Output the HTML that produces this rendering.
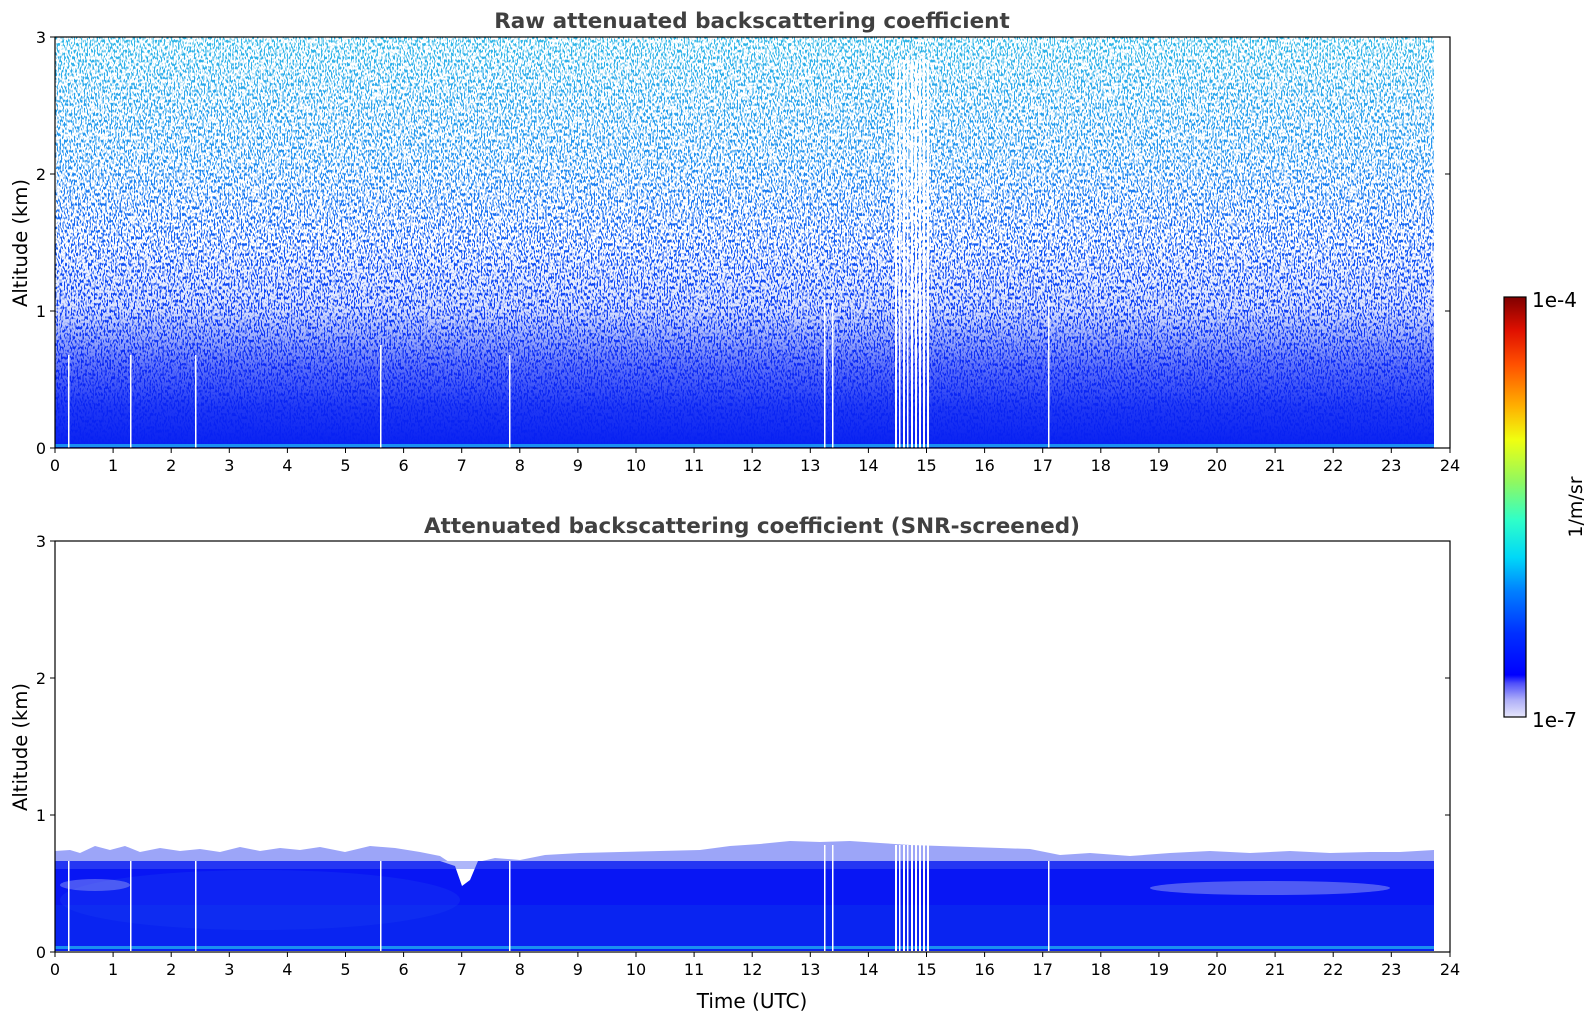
<!DOCTYPE html>
<html><head><meta charset="utf-8"><style>
html,body{margin:0;padding:0;background:#fff;}
svg{display:block;}
text{font-family:"DejaVu Sans","Liberation Sans",sans-serif;}
</style></head><body>
<svg width="1595" height="1020" viewBox="0 0 1595 1020" xmlns="http://www.w3.org/2000/svg">
<defs>
  <linearGradient id="tg" x1="0" y1="0" x2="0" y2="1">
    <stop offset="0" stop-color="#30b8e8"/>
    <stop offset="0.3" stop-color="#2090f0"/>
    <stop offset="0.55" stop-color="#1050f5"/>
    <stop offset="0.8" stop-color="#0a28f5"/>
    <stop offset="1" stop-color="#0820f2"/>
  </linearGradient>
  <linearGradient id="wm" x1="0" y1="0" x2="0" y2="1">
    <stop offset="0" stop-color="#fff" stop-opacity="1"/>
    <stop offset="0.5" stop-color="#fff" stop-opacity="1"/>
    <stop offset="0.66" stop-color="#fff" stop-opacity="0.85"/>
    <stop offset="0.8" stop-color="#fff" stop-opacity="0.35"/>
    <stop offset="0.9" stop-color="#fff" stop-opacity="0.1"/>
    <stop offset="1" stop-color="#fff" stop-opacity="0"/>
  </linearGradient>
  <mask id="m1"><rect x="55" y="37" width="1380" height="411" fill="url(#wm)"/></mask>
  <filter id="noise" x="0" y="0" width="100%" height="100%">
    <feTurbulence type="fractalNoise" baseFrequency="0.7 0.3" numOctaves="1" seed="3" result="n"/>
    <feColorMatrix in="n" type="matrix" values="0 0 0 0 1  0 0 0 0 1  0 0 0 0 1  10 0 0 0 -4.0"/>
  </filter>
  <linearGradient id="cb" x1="0" y1="1" x2="0" y2="0">
    <stop offset="0" stop-color="#e6e6fa"/>
    <stop offset="0.04" stop-color="#b0b0f8"/>
    <stop offset="0.08" stop-color="#5050fa"/>
    <stop offset="0.1" stop-color="#0000ff"/>
    <stop offset="0.2" stop-color="#0030ff"/>
    <stop offset="0.3" stop-color="#0080ff"/>
    <stop offset="0.38" stop-color="#00d8f8"/>
    <stop offset="0.47" stop-color="#30ffc8"/>
    <stop offset="0.56" stop-color="#90f860"/>
    <stop offset="0.66" stop-color="#f0ff10"/>
    <stop offset="0.74" stop-color="#ffb000"/>
    <stop offset="0.84" stop-color="#ff5000"/>
    <stop offset="0.92" stop-color="#e01000"/>
    <stop offset="1" stop-color="#800000"/>
  </linearGradient>
</defs>

<!-- TOP PLOT -->
<text x="752" y="28" font-size="21.5" font-weight="bold" fill="#404040" text-anchor="middle">Raw attenuated backscattering coefficient</text>
<rect x="55" y="37" width="1379" height="411" fill="url(#tg)"/>
<rect x="55" y="37" width="1379" height="411" fill="#fff" filter="url(#noise)" mask="url(#m1)"/>
<rect x="55" y="444" width="1379" height="3" fill="#1a90f0"/>
<g fill="#fff">
  <rect x="68" y="355" width="1.5" height="93"/>
  <rect x="130" y="355" width="1.5" height="93"/>
  <rect x="195" y="355" width="1.5" height="93"/>
  <rect x="380" y="345" width="1.5" height="103"/>
  <rect x="509" y="355" width="1.5" height="93"/>
  <rect x="824" y="300" width="1.5" height="148"/>
  <rect x="832" y="300" width="1.5" height="148"/>
  <rect x="895" y="60" width="2" height="388"/><rect x="899" y="60" width="1.5" height="388"/>
  <rect x="903" y="60" width="2" height="388"/><rect x="907" y="60" width="1.5" height="388"/>
  <rect x="911" y="60" width="2" height="388"/><rect x="915" y="60" width="2" height="388"/>
  <rect x="919" y="60" width="2" height="388"/><rect x="923" y="60" width="2" height="388"/>
  <rect x="927" y="60" width="2" height="388"/>
  <rect x="1048" y="300" width="1.5" height="148"/>
</g>
<rect x="55" y="37" width="1395" height="411" fill="none" stroke="#000" stroke-width="1.2"/>

<!-- BOTTOM PLOT -->
<text x="752" y="533" font-size="21.5" font-weight="bold" fill="#404040" text-anchor="middle">Attenuated backscattering coefficient (SNR-screened)</text>
<g>
  <path d="M55 861 L55 851 L70 850 L80 853 L95 846 L110 850 L125 846 L140 852 L160 848 L180 851 L200 849 L220 852 L240 847 L260 851 L280 848 L300 850 L320 847 L345 852 L370 846 L395 848 L420 852 L440 856 L455 866 L462 886 L470 880 L478 862 L495 858 L520 860 L545 855 L580 853 L620 852 L660 851 L700 850 L730 846 L760 844 L790 841 L820 842 L850 841 L880 843 L910 845 L940 846 L970 847 L1000 848 L1030 849 L1060 855 L1090 853 L1130 856 L1170 853 L1210 851 L1250 853 L1290 851 L1330 853 L1370 852 L1400 852 L1434 850 L1434 861 Z" fill="#3a4cf2" opacity="0.5"/>
  <rect x="55" y="861" width="1379" height="90" fill="#0816f4"/>
  <rect x="55" y="905" width="1379" height="46" fill="#0a28f0" opacity="0.8"/>
  <path d="M440 861 L455 866 L462 886 L470 880 L478 861 Z" fill="#fff"/>
  <ellipse cx="260" cy="900" rx="200" ry="30" fill="#1a3cf0" opacity="0.35"/>
  <ellipse cx="1270" cy="888" rx="120" ry="7" fill="#8a96f4" opacity="0.55"/>
  <ellipse cx="95" cy="885" rx="35" ry="6" fill="#8a96f4" opacity="0.5"/>
  <rect x="55" y="861" width="1379" height="8" fill="#4a5ef2" opacity="0.45"/>
  <rect x="55" y="946" width="1379" height="3" fill="#1a90f0"/>
</g>
<g fill="#fff">
  <rect x="68" y="861" width="1.5" height="90"/>
  <rect x="130" y="861" width="1.5" height="90"/>
  <rect x="195" y="861" width="1.5" height="90"/>
  <rect x="380" y="861" width="1.5" height="90"/>
  <rect x="509" y="861" width="1.5" height="90"/>
  <rect x="824" y="845" width="1.5" height="106"/>
  <rect x="832" y="845" width="1.5" height="106"/>
  <rect x="895" y="845" width="2" height="106"/><rect x="899" y="845" width="1.5" height="106"/>
  <rect x="903" y="845" width="2" height="106"/><rect x="907" y="845" width="1.5" height="106"/>
  <rect x="911" y="845" width="2" height="106"/><rect x="915" y="845" width="2" height="106"/>
  <rect x="919" y="845" width="2" height="106"/><rect x="923" y="845" width="2" height="106"/>
  <rect x="927" y="845" width="2" height="106"/>
  <rect x="1048" y="861" width="1.5" height="90"/>
</g>
<rect x="55" y="541" width="1395" height="411" fill="none" stroke="#000" stroke-width="1.2"/>

<!-- ticks -->
<g stroke="#000" stroke-width="1">
  <path d="M55 448v5M113.1 448v5M171.2 448v5M229.3 448v5M287.4 448v5M345.5 448v5M403.6 448v5M461.7 448v5M519.8 448v5M577.9 448v5M636 448v5M694.1 448v5M752.2 448v5M810.3 448v5M868.4 448v5M926.5 448v5M984.6 448v5M1042.7 448v5M1100.8 448v5M1158.9 448v5M1217 448v5M1275.1 448v5M1333.2 448v5M1391.3 448v5M1450 448v5"/>
  <path d="M55 952v5M113.1 952v5M171.2 952v5M229.3 952v5M287.4 952v5M345.5 952v5M403.6 952v5M461.7 952v5M519.8 952v5M577.9 952v5M636 952v5M694.1 952v5M752.2 952v5M810.3 952v5M868.4 952v5M926.5 952v5M984.6 952v5M1042.7 952v5M1100.8 952v5M1158.9 952v5M1217 952v5M1275.1 952v5M1333.2 952v5M1391.3 952v5M1450 952v5"/>
  <path d="M50 448h5M50 311h5M50 174h5M50 37h5M1445 311h5M1445 174h5"/>
  <path d="M50 952h5M50 815h5M50 678h5M50 541h5M1445 815h5M1445 678h5"/>
</g>
<g font-size="16" fill="#000" text-anchor="middle">
  <text x="55" y="471">0</text><text x="113.1" y="471">1</text><text x="171.2" y="471">2</text><text x="229.3" y="471">3</text><text x="287.4" y="471">4</text><text x="345.5" y="471">5</text><text x="403.6" y="471">6</text><text x="461.7" y="471">7</text><text x="519.8" y="471">8</text><text x="577.9" y="471">9</text><text x="636" y="471">10</text><text x="694.1" y="471">11</text><text x="752.2" y="471">12</text><text x="810.3" y="471">13</text><text x="868.4" y="471">14</text><text x="926.5" y="471">15</text><text x="984.6" y="471">16</text><text x="1042.7" y="471">17</text><text x="1100.8" y="471">18</text><text x="1158.9" y="471">19</text><text x="1217" y="471">20</text><text x="1275.1" y="471">21</text><text x="1333.2" y="471">22</text><text x="1391.3" y="471">23</text><text x="1450" y="471">24</text>
  <text x="55" y="975">0</text><text x="113.1" y="975">1</text><text x="171.2" y="975">2</text><text x="229.3" y="975">3</text><text x="287.4" y="975">4</text><text x="345.5" y="975">5</text><text x="403.6" y="975">6</text><text x="461.7" y="975">7</text><text x="519.8" y="975">8</text><text x="577.9" y="975">9</text><text x="636" y="975">10</text><text x="694.1" y="975">11</text><text x="752.2" y="975">12</text><text x="810.3" y="975">13</text><text x="868.4" y="975">14</text><text x="926.5" y="975">15</text><text x="984.6" y="975">16</text><text x="1042.7" y="975">17</text><text x="1100.8" y="975">18</text><text x="1158.9" y="975">19</text><text x="1217" y="975">20</text><text x="1275.1" y="975">21</text><text x="1333.2" y="975">22</text><text x="1391.3" y="975">23</text><text x="1450" y="975">24</text>
</g>
<g font-size="16" fill="#000" text-anchor="end">
  <text x="46" y="454">0</text><text x="46" y="317">1</text><text x="46" y="180">2</text><text x="46" y="43">3</text>
  <text x="46" y="958">0</text><text x="46" y="821">1</text><text x="46" y="684">2</text><text x="46" y="547">3</text>
</g>
<text transform="translate(27 243) rotate(-90)" font-size="19.5" text-anchor="middle">Altitude (km)</text>
<text transform="translate(27 747) rotate(-90)" font-size="19.5" text-anchor="middle">Altitude (km)</text>
<text x="752" y="1008" font-size="20" text-anchor="middle">Time (UTC)</text>

<!-- colorbar -->
<rect x="1504" y="297" width="22" height="420" fill="url(#cb)" stroke="#000" stroke-width="1.2"/>
<text x="1532" y="307" font-size="20">1e-4</text>
<text x="1532" y="727" font-size="20">1e-7</text>
<text transform="translate(1582 507) rotate(-90)" font-size="19" text-anchor="middle">1/m/sr</text>
</svg>
</body></html>
